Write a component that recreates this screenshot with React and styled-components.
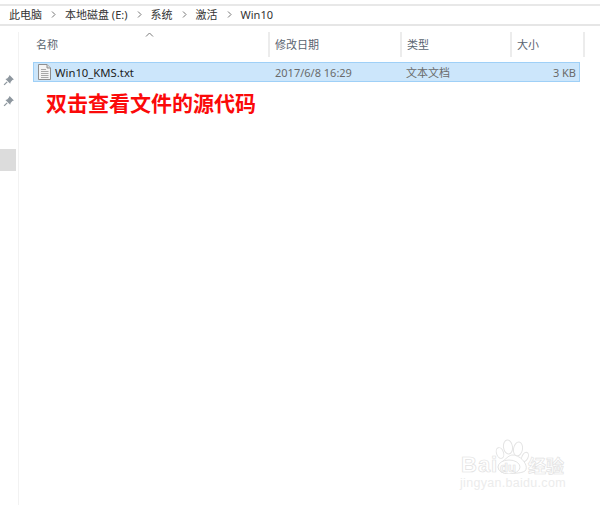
import { Fragment } from "react";
import styled, { createGlobalStyle } from "styled-components";

const GlobalStyle = createGlobalStyle`
  html, body {
    margin: 0;
    padding: 0;
    background: #fff;
  }
  body {
    font-family: "Noto Sans CJK SC", "Noto Sans", sans-serif;
  }
`;

const Page = styled.div`
  position: relative;
  width: 600px;
  height: 505px;
  overflow: hidden;
  background: #fff;
  padding-top: 4px;
  box-sizing: border-box;
`;

const AddressBar = styled.div`
  display: flex;
  align-items: center;
  box-sizing: border-box;
  height: 22px;
  padding: 0 0 2px 9px;
  border-top: 2px solid #e8e8e8;
  border-bottom: 2px solid #e6e6e6;
  font-size: 11px;
  color: #333;
`;

const Crumb = styled.span`
  white-space: nowrap;
  font-family: "Noto Sans", "Noto Sans CJK SC", sans-serif;
`;

const Chevron = styled.svg`
  width: 5px;
  height: 7px;
  margin: 1px 9px 0 9px;
  flex: none;
`;

const Body = styled.div`
  display: flex;
  margin-top: 6px;
  height: 473px;
`;

const Sidebar = styled.div`
  width: 19px;
  flex: none;
  box-sizing: border-box;
  border-right: 1px solid #f2f2f2;
  padding-top: 37px;
  display: flex;
  flex-direction: column;
`;

const PinWrap = styled.div`
  height: 21px;
  padding-left: 3px;
  display: flex;
  align-items: center;
`;

const ScrollBlock = styled.div`
  width: 16px;
  height: 22px;
  margin-top: 38px;
  background: #dcdcdc;
`;

const Main = styled.div`
  padding-left: 14px;
  flex: 1;
`;

const Table = styled.div`
  width: 550px;
`;

const HeaderRow = styled.div`
  position: relative;
  display: grid;
  grid-template-columns: 237px 132px 110px 73px;
  height: 25px;
`;

const HeaderCell = styled.div`
  box-sizing: border-box;
  padding: 0 0 2px 5px;
  height: 25px;
  display: flex;
  align-items: center;
  font-size: 11px;
  color: #5a6470;
  border-right: 2px solid #ececec;
  &:first-of-type {
    padding-left: 3px;
  }
`;

const SortCaret = styled.svg`
  position: absolute;
  left: 112px;
  top: 0;
  width: 9px;
  height: 5px;
`;

const FileRow = styled.div`
  display: grid;
  grid-template-columns: 235px 131px 111px 65px;
  align-items: center;
  box-sizing: border-box;
  width: 547px;
  height: 20px;
  margin-top: 5px;
  background: #cce6fb;
  border: 1px solid #9fd0f7;
  font-size: 11px;
  color: #6a6a6a;
  font-family: "Noto Sans", "Noto Sans CJK SC", sans-serif;
`;

const NameCell = styled.div`
  display: flex;
  align-items: center;
  gap: 4px;
  padding-left: 4px;
  color: #1c1c1c;
  font-size: 11.3px;
`;

const Cell = styled.div`
  padding-left: 6px;
  text-align: ${(p) => p.$align || "left"};
  white-space: nowrap;
`;

const Caption = styled.div`
  margin: 6px 0 0 13px;
  font-size: 21px;
  font-weight: 700;
  line-height: 28px;
  color: #fb0a0a;
  white-space: nowrap;
`;

const Watermark = styled.div`
  position: absolute;
  left: 458px;
  top: 438px;
  width: 120px;
  height: 60px;
`;

const Brand = styled.div`
  position: absolute;
  left: 3px;
  top: 14px;
  font-family: "Liberation Sans", sans-serif;
  font-size: 22px;
  font-weight: 700;
  letter-spacing: 1px;
  color: #fff;
  -webkit-text-stroke: 0.7px #e2e2e2;
  white-space: nowrap;
`;

const BrandCn = styled(Brand)`
  left: 70px;
  top: 16px;
  font-family: "Noto Sans CJK SC", sans-serif;
  font-size: 18px;
  line-height: 22px;
  letter-spacing: 0;
`;

const BrandDu = styled(Brand)`
  left: 42px;
  top: 22px;
  font-size: 13px;
  letter-spacing: 0;
`;

const Domain = styled.div`
  position: absolute;
  left: 2px;
  top: 38px;
  font-family: "Liberation Sans", sans-serif;
  font-size: 12.5px;
  color: #ececec;
  letter-spacing: 0.3px;
  white-space: nowrap;
`;

const Paw = styled.svg`
  position: absolute;
  left: 36px;
  top: 0;
  width: 36px;
  height: 36px;
`;

const ChevronIcon = () => (
  <Chevron viewBox="0 0 5 7">
    <path d="M1 0.5 L4 3.5 L1 6.5" fill="none" stroke="#777" strokeWidth="1" />
  </Chevron>
);

const PinIcon = () => (
  <svg width="12" height="12" viewBox="0 0 11 11">
    <path d="M6 1 L10 5 L8.6 5.6 L7 7.4 L6.6 9 L2.2 4.6 L3.8 4.2 L5.4 2.4 Z" fill="#8e979f" />
    <path d="M3.8 7.2 L1 10" stroke="#8e979f" strokeWidth="1.2" />
  </svg>
);

const FileIcon = () => (
  <svg width="13" height="16" viewBox="0 0 13 16">
    <path d="M0.5 0.5 H9 L12.5 4 V15.5 H0.5 Z" fill="#f4f4f4" stroke="#8f8f8f" />
    <path d="M9 0.5 V4 H12.5" fill="#dcdcdc" stroke="#8f8f8f" />
    <path d="M3 5.5 H8 M3 7.5 H10.5 M3 9.5 H10.5 M3 11.5 H10.5 M3 13.5 H10.5" stroke="#a8a8a8" />
  </svg>
);

const crumbs = ["此电脑", "本地磁盘 (E:)", "系统", "激活", "Win10"];

export default function App() {
  return (
    <Page>
      <GlobalStyle />
      <AddressBar>
        {crumbs.map((c, i) => (
          <Fragment key={c}>
            {i > 0 && <ChevronIcon />}
            <Crumb>{c}</Crumb>
          </Fragment>
        ))}
      </AddressBar>
      <Body>
        <Sidebar>
          <PinWrap><PinIcon /></PinWrap>
          <PinWrap><PinIcon /></PinWrap>
          <ScrollBlock />
        </Sidebar>
        <Main>
          <Table>
            <HeaderRow>
              <SortCaret viewBox="0 0 9 5">
                <path d="M1 4.5 L4.5 1 L8 4.5" fill="none" stroke="#7a7a7a" />
              </SortCaret>
              <HeaderCell>名称</HeaderCell>
              <HeaderCell>修改日期</HeaderCell>
              <HeaderCell>类型</HeaderCell>
              <HeaderCell>大小</HeaderCell>
            </HeaderRow>
            <FileRow>
              <NameCell><FileIcon />Win10_KMS.txt</NameCell>
              <Cell>2017/6/8 16:29</Cell>
              <Cell>文本文档</Cell>
              <Cell $align="right">3 KB</Cell>
            </FileRow>
          </Table>
          <Caption>双击查看文件的源代码</Caption>
        </Main>
      </Body>
      <Watermark>
        <Paw viewBox="0 0 36 36">
          <g fill="#fff" stroke="#e4e4e4" strokeWidth="1">
            <ellipse cx="6" cy="15" rx="3.5" ry="5.5" transform="rotate(-20 6 15)" />
            <ellipse cx="14" cy="9" rx="4.5" ry="7" transform="rotate(-8 14 9)" />
            <ellipse cx="24" cy="11" rx="4.5" ry="7" transform="rotate(10 24 11)" />
            <ellipse cx="31" cy="19" rx="3" ry="5" transform="rotate(25 31 19)" />
            <path d="M19 17 C15 17 13 20 9 23 C5 26 2 30 7 34 C11 36 27 36 31 33 C35 29 29 21 25 19 C23 18 21 17 19 17 Z" />
            <ellipse cx="15" cy="29" rx="11" ry="7" />
          </g>
        </Paw>
        <Brand>Bai</Brand>
        <BrandDu>du</BrandDu>
        <BrandCn>经验</BrandCn>
        <Domain>jingyan.baidu.com</Domain>
      </Watermark>
    </Page>
  );
}
